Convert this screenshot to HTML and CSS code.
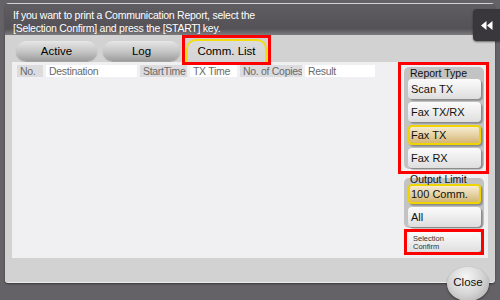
FILE: index.html
```html
<!doctype html>
<html lang="en">
<head>
	<meta charset="UTF-8">
	<title>Communication Report</title>
	<link rel="stylesheet" href="styles.css">
</head>
<body>
	<div class="panel">
		<div class="header">
			If you want to print a Communication Report, select the<br>
			[Selection Confirm] and press the [START] key.
		</div>
		<div class="tabs">
			<a href="javascript:;" class="tab">Active</a>
			<a href="javascript:;" class="tab log">Log</a>
			<a href="javascript:;" class="tab cur mark">Comm. List</a>
		</div>
		<div class="content">
			<div class="list">
				<ul class="cols">
					<li class="g c1">No.</li>
					<li class="w c2">Destination</li>
					<li class="g c3">StartTime</li>
					<li class="w c4">TX Time</li>
					<li class="g c5">No. of Copies</li>
					<li class="w c6">Result</li>
				</ul>
			</div>
			<div class="side">
				<div class="group mark">
					<div class="label">Report Type</div>
					<a href="javascript:;" class="btn">Scan TX</a>
					<a href="javascript:;" class="btn">Fax TX/RX</a>
					<a href="javascript:;" class="btn on">Fax TX</a>
					<a href="javascript:;" class="btn">Fax RX</a>
				</div>
				<div class="group limit">
					<div class="label">Output Limit</div>
					<a href="javascript:;" class="btn on">100 Comm.</a>
					<a href="javascript:;" class="btn">All</a>
				</div>
				<a href="javascript:;" class="btn confirm mark">Selection<br>Confirm</a>
			</div>
		</div>
	</div>

	<!--返回-->
	<a href="javascript:;" class="back">
		<svg width="12" height="9" viewBox="0 0 12 9"><path d="M0 4.5 L5.5 0 V9 Z M6 4.5 L11.5 0 V9 Z" fill="#fff"/></svg>
	</a>
	<a href="javascript:;" class="close">Close</a>
</body>
</html>
```

FILE: styles.css
```css
*{margin:0; padding:0;}
li{list-style:none;}
a{text-decoration:none; color:#111;}

body{
	width:500px;
	height:300px;
	position:relative;
	overflow:hidden;
	background:#646266;
	font-family:"Liberation Sans", Arial, sans-serif;
}

.panel{
	margin:3px 5px 0 5px;
	width:490px;
	height:279px;
	background:#d2d2d2;
	border-radius:4px 4px 3px 3px;
	box-shadow:0 1px 0 #ececec, 0 2px 2px rgba(0,0,0,0.45);
	display:flex;
	flex-direction:column;
}
.header{
	margin-top:1px;
	height:31px;
	box-sizing:border-box;
	padding:5px 0 0 8px;
	background:linear-gradient(#5f5d61, #545256 80%, #7c7b7e);
	color:#fff;
	font-size:10.5px;
	line-height:13px;
	letter-spacing:-0.25px;
}

/*标签*/
.tabs{
	height:27px;
	display:flex;
	align-items:flex-end;
	gap:6px;
	padding-left:11px;
}
.tab{
	width:81px;
	height:20px;
	margin-bottom:1px;
	border-radius:10px;
	background:linear-gradient(#e6e6e6, #c4c4c4 55%, #9c9c9c);
	box-shadow:0 1px 1px rgba(0,0,0,0.25);
	font-size:11.5px;
	line-height:20px;
	text-align:center;
	color:#000;
}
.log{width:77px;}
.cur{
	height:23px;
	margin-bottom:0;
	box-sizing:border-box;
	border:2px solid #f3dc10;
	border-bottom:none;
	border-radius:10px 10px 0 0;
	background:linear-gradient(#dcdcdc, #d4d4d6);
	box-shadow:none;
	line-height:21px;
}
/*红框*/
.mark{position:relative;}
.mark::after{
	content:'';
	position:absolute;
	left:-4px; right:-4px; top:-4px; bottom:-4px;
	border:3px solid #f00;
	pointer-events:none;
}
.cur.mark::after{left:-6px; right:-6px; top:-6px; bottom:-3px;}

.content{
	margin:0 7px;
	height:196px;
	background:#f0eff1;
	display:flex;
}
.list{
	flex:1;
	padding:3px 0 0 5px;
}
.cols{
	display:flex;
	gap:3px;
}
.cols li{
	height:12px;
	box-sizing:border-box;
	padding-left:3px;
	font-size:10.5px;
	line-height:12px;
	letter-spacing:-0.3px;
	color:#6a6a6a;
	white-space:nowrap;
	overflow:hidden;
}
.cols .g{background:#dcdbdd;}
.cols .w{background:#fff;}
.c1{width:26px;}
.c2{width:91px;}
.c3{width:47px;}
.c4{width:47px;}
.c5{width:62px;}
.c6{width:70px;}

/*右侧*/
.side{
	width:80px;
	margin-right:4px;
	padding-top:5px;
	display:flex;
	flex-direction:column;
}
.group{
	background:#c3c3c3;
	border-radius:5px;
	padding:0 3px 1px 4px;
}
.group.mark::after{left:-6px; right:-5px; top:-5px; bottom:-5px;}
.label{
	height:12px;
	padding-left:2px;
	font-size:10.5px;
	line-height:12px;
	color:#111;
}
.btn{
	display:block;
	height:20px;
	margin-top:3px;
	box-sizing:border-box;
	padding-left:3px;
	border-radius:4px;
	background:linear-gradient(#fbfbfb, #ededed 50%, #dedede);
	box-shadow:1px 1px 0 #8c8c8c, 2px 2px 1px rgba(0,0,0,0.2);
	font-size:11px;
	line-height:20px;
}
.label + .btn{margin-top:0;}
.btn.on{
	border:2px solid #f0d400;
	padding-left:1px;
	line-height:16px;
	background:linear-gradient(#f6ecd2, #e6d2a4 50%, #d4b674);
}
.limit{margin-top:9px;}
.limit .label{margin-top:-5px; height:11px;}
.confirm{
	margin:4px 3px 0 4px;
	padding:3px 0 0 5px;
	font-size:7.5px;
	line-height:7.5px;
	color:#333;
}
.confirm.mark::after{left:-4px; right:-3px; top:-3px; bottom:-3px;}

.back{
	position:absolute;
	right:0;
	top:9px;
	width:27px;
	height:32px;
	border-radius:4px 0 0 4px;
	background:#39373b;
	box-shadow:0 1px 2px rgba(0,0,0,0.5);
	display:flex;
	align-items:center;
	justify-content:center;
}
.close{
	position:absolute;
	left:447px;
	top:267px;
	width:42px;
	height:34px;
	border-radius:50%;
	background:radial-gradient(ellipse at 45% 30%, #f6f6f6, #d6d6d6 50%, #a4a4a4);
	box-shadow:0 1px 2px rgba(0,0,0,0.5);
	font-size:11.5px;
	line-height:30px;
	text-align:center;
}
```
